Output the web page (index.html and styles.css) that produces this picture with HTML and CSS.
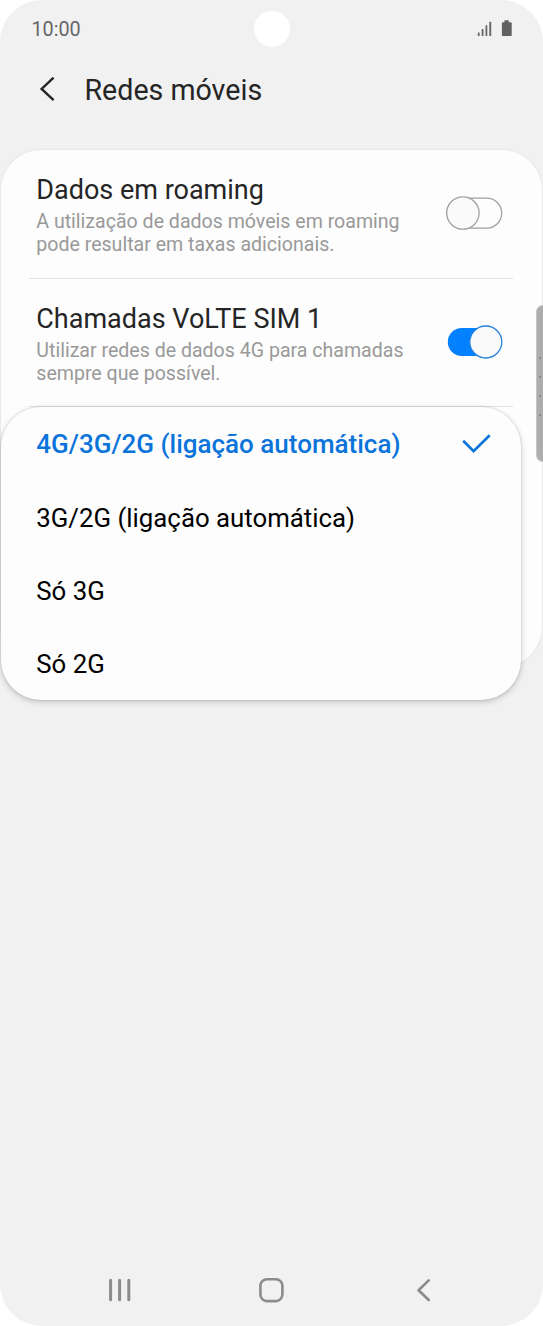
FILE: index.html
```html
<!DOCTYPE html>
<html lang="pt">
<head>
  <meta charset="UTF-8">
  <meta name="viewport" content="width=device-width, initial-scale=1.0">
  <title>Redes móveis</title>
  <link rel="stylesheet" href="styles.css">
</head>
<body>
  <div class="phone">
    <div class="status-bar">
      <span class="time">10:00</span>
      <span class="camera"></span>
      <div class="status-icons">
        <svg width="16" height="16" viewBox="0 0 16 16" fill="#666">
          <rect x="0.8" y="11.5" width="1.8" height="3.5" rx="0.5"/>
          <rect x="4.7" y="8" width="1.8" height="7" rx="0.5"/>
          <rect x="8.5" y="4.3" width="1.8" height="10.7" rx="0.5"/>
          <rect x="12.3" y="0.8" width="1.9" height="14.2" rx="0.5"/>
        </svg>
        <svg width="12" height="17" viewBox="0 0 12 17" fill="#616161">
          <path d="M3.5 0.3h4.2v1.9h2.2q0.8 0 0.8 0.8v12.3q0 0.8 -0.8 0.8h-8.2q-0.8 0 -0.8 -0.8v-12.3q0 -0.8 0.8 -0.8h1.8z"/>
        </svg>
      </div>
    </div>

    <div class="header">
      <svg width="18" height="28" viewBox="0 0 18 28" fill="none" stroke="#252525" stroke-width="2.4">
        <path d="M15.6 2.6L3.6 14L15.6 25.2"/>
      </svg>
      <h1>Redes móveis</h1>
    </div>

    <div class="card">
      <div class="setting">
        <div class="setting-text">
          <h2>Dados em roaming</h2>
          <p>A utilização de dados móveis em roaming<br>pode resultar em taxas adicionais.</p>
        </div>
        <svg width="58" height="36" viewBox="0 0 58 36" fill="#fafafa" stroke="#a0a0a0" stroke-width="1.3">
          <rect x="2" y="3.1" width="54.7" height="30" rx="15" fill="#fdfdfd"/>
          <circle cx="17.9" cy="18" r="16.2"/>
        </svg>
      </div>
      <div class="setting">
        <div class="setting-text">
          <h2>Chamadas VoLTE SIM 1</h2>
          <p>Utilizar redes de dados 4G para chamadas<br>sempre que possível.</p>
        </div>
        <svg width="58" height="36" viewBox="0 0 58 36">
          <rect x="2.8" y="3.9" width="50" height="28.2" rx="14.1" fill="#0381fe"/>
          <circle cx="40.8" cy="18" r="16" fill="#fafafa" stroke="#2583dc" stroke-width="1.3"/>
        </svg>
      </div>

      <div class="menu">
        <div class="option selected">
          <span>4G/3G/2G (ligação automática)</span>
          <svg width="30" height="24" viewBox="0 0 30 24" fill="none" stroke="#0b74da" stroke-width="2.7">
            <path d="M2.2 8.7L12.6 19.2L28.7 3.2"/>
          </svg>
        </div>
        <div class="option"><span>3G/2G (ligação automática)</span></div>
        <div class="option"><span>Só 3G</span></div>
        <div class="option"><span>Só 2G</span></div>
      </div>

      <!-- edge panel handle -->
      <div class="edge-handle">
        <i></i><i></i><i></i><i></i>
      </div>
    </div>

    <div class="nav-bar">
      <svg width="26" height="26" viewBox="0 0 26 26" stroke="#8b8b8b" stroke-width="3" stroke-linecap="round">
        <path d="M3.6 3.2V22.8M12.6 3.2V22.8M21.8 3.2V22.8"/>
      </svg>
      <svg width="26" height="26" viewBox="0 0 26 26" fill="none" stroke="#8b8b8b" stroke-width="2.6">
        <rect x="2.4" y="2.3" width="22" height="21.8" rx="6.5"/>
      </svg>
      <svg width="26" height="26" viewBox="0 0 26 26" fill="none" stroke="#8b8b8b" stroke-width="2.7" stroke-linecap="round" stroke-linejoin="round">
        <path d="M18.7 3.4L8.6 13.2L18.7 23"/>
      </svg>
    </div>
  </div>
</body>
</html>
```
FILE: styles.css
```css
* {
  box-sizing: border-box;
}
body {
  margin: 0;
  background: #ffffff;
  font-family: Roboto, sans-serif;
  color: #252525;
}
svg {
  display: block;
  flex-shrink: 0;
}
h1, h2, p {
  margin: 0;
  font-weight: 400;
  white-space: nowrap;
}
.phone {
  display: flex;
  flex-direction: column;
  width: 543px;
  height: 1326px;
  background: #f1f1f1;
  border-radius: 42px;
  overflow: hidden;
}
.status-bar {
  display: grid;
  grid-template-columns: 1fr 36px 1fr;
  align-items: center;
  height: 57px;
  padding: 0 30px 0 31px;
}
.time {
  font-size: 19.8px;
  color: #666666;
  padding: 1px 0 0 0.4px;
}
.camera {
  width: 36px;
  height: 36px;
  border-radius: 50%;
  background: #ffffff;
}
.status-icons {
  display: flex;
  justify-content: flex-end;
  align-items: center;
  gap: 8px;
}
.header {
  display: flex;
  align-items: center;
  height: 64px;
  gap: 29px;
  padding-left: 37.5px;
}
h1 {
  font-size: 28.6px;
  line-height: 34px;
  padding-top: 2px;
}
.card {
  position: relative;
  width: 541px;
  height: 517px;
  margin: 29px 1px 0;
  background: #fdfdfd;
  border-radius: 40px;
  box-shadow: 0 0 1px 1px #e8e8e8;
}
.setting {
  display: flex;
  justify-content: space-between;
  height: 128.5px;
  margin: 0 29px 0 28px;
  padding: 24px 10px 0 7.3px;
  border-bottom: 1.5px solid #e2e2e2;
}
.setting > svg {
  margin-top: 21px;
}
h2 {
  font-size: 27px;
  line-height: 32px;
}
p {
  font-size: 19.57px;
  line-height: 23px;
  margin-top: 4px;
  color: #999999;
}
/* popup list over the card */
.menu {
  position: absolute;
  top: 257px;
  left: 0;
  width: 520px;
  background: #fdfdfd;
  border-radius: 40px;
  box-shadow: 0 2px 6px rgba(0, 0, 0, 0.2), 0 0 1px 1px rgba(0, 0, 0, 0.06);
}
.option {
  display: flex;
  align-items: center;
  justify-content: space-between;
  height: 73.2px;
  padding: 2px 30px 0 35.3px;
  font-size: 25.8px;
  color: #000000;
}
.option.selected {
  padding-top: 1px;
  font-size: 26px;
  font-weight: 500;
  color: #0b74da;
}
.edge-handle {
  position: absolute;
  top: 155px;
  right: -1px;
  width: 7px;
  height: 157px;
  display: flex;
  flex-direction: column;
  align-items: center;
  justify-content: center;
  gap: 17px;
  padding-top: 5px;
  background: #adadad;
  border: 1px solid #c4c4c4;
  border-right: 0;
  border-radius: 7px 0 0 7px;
}
.edge-handle i {
  width: 2px;
  height: 2px;
  background: #8c8c8c;
}
.nav-bar {
  display: flex;
  justify-content: space-between;
  margin: auto 107.5px 23px 106.5px;
}
```
